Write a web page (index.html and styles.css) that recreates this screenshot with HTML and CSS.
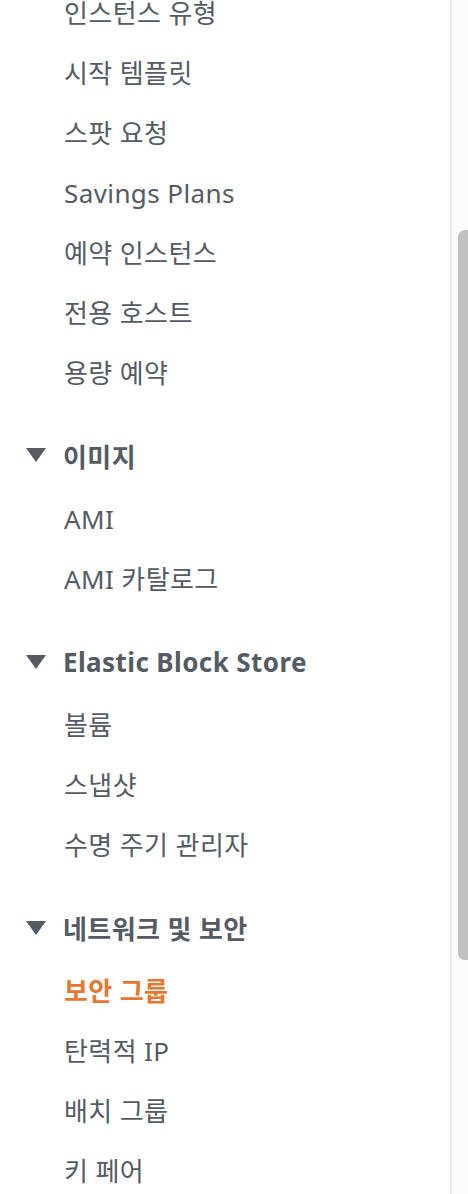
FILE: index.html
```html
<!DOCTYPE html>
<html lang="ko">
<head>
<meta charset="utf-8">
<link rel="stylesheet" href="styles.css">
</head>
<body>
<div class="layout">
  <nav class="nav">
    <ul class="items first">
      <li class="item">인스턴스 유형</li>
      <li class="item">시작 템플릿</li>
      <li class="item">스팟 요청</li>
      <li class="item">Savings Plans</li>
      <li class="item">예약 인스턴스</li>
      <li class="item">전용 호스트</li>
      <li class="item">용량 예약</li>
    </ul>
    <section class="section">
      <div class="heading"><svg class="caret" width="20" height="14" viewBox="0 0 20 14"><polygon points="0,0 20,0 10,14" fill="#545b64"/></svg><span>이미지</span></div>
      <ul class="items">
        <li class="item">AMI</li>
        <li class="item">AMI 카탈로그</li>
      </ul>
    </section>
    <section class="section">
      <div class="heading"><svg class="caret" width="20" height="14" viewBox="0 0 20 14"><polygon points="0,0 20,0 10,14" fill="#545b64"/></svg><span>Elastic Block Store</span></div>
      <ul class="items">
        <li class="item">볼륨</li>
        <li class="item">스냅샷</li>
        <li class="item">수명 주기 관리자</li>
      </ul>
    </section>
    <section class="section">
      <div class="heading"><svg class="caret" width="20" height="14" viewBox="0 0 20 14"><polygon points="0,0 20,0 10,14" fill="#545b64"/></svg><span>네트워크 및 보안</span></div>
      <ul class="items">
        <li class="item active">보안 그룹</li>
        <li class="item">탄력적 IP</li>
        <li class="item">배치 그룹</li>
        <li class="item">키 페어</li>
      </ul>
    </section>
  </nav>
  <div class="divider"></div>
  <div class="track"><div class="thumb"></div></div>
</div>
</body>
</html>
```

FILE: styles.css
```css
html, body {
  margin: 0;
  padding: 0;
  background: #ffffff;
}
body {
  font-family: "Noto Sans", "Noto Sans CJK KR", sans-serif;
  color: #545b64;
  width: 468px;
  height: 1194px;
  overflow: hidden;
}
.layout {
  display: flex;
  height: 1194px;
}
.nav {
  width: 450px;
  flex: none;
  overflow: hidden;
}
.items {
  list-style: none;
  margin: 0;
  padding: 0;
}
.items.first {
  margin-top: -17.5px;
}
.item {
  height: 60px;
  line-height: 60px;
  padding-left: 64px;
  font-size: 26px;
  letter-spacing: 0.4px;
  white-space: nowrap;
}
.item.active {
  color: #e5772f;
  font-weight: 700;
}
.section {
  margin-top: 23.25px;
}
.heading {
  height: 63px;
  display: flex;
  align-items: center;
  gap: 17px;
  padding-left: 26px;
  font-size: 26px;
  letter-spacing: 0.4px;
  font-weight: 700;
  white-space: nowrap;
}
.heading span {
  margin-top: -3px;
}
.caret {
  flex: none;
  margin-top: -4px;
}
.divider {
  width: 2px;
  flex: none;
  background: #eaeaea;
}
.track {
  width: 16px;
  flex: none;
  background: #fafafa;
  overflow: hidden;
  padding-top: 230px;
  box-sizing: border-box;
}
.thumb {
  width: 16px;
  height: 730px;
  margin-left: 6px;
  background: #c1c1c1;
  border-radius: 7px;
}
```
